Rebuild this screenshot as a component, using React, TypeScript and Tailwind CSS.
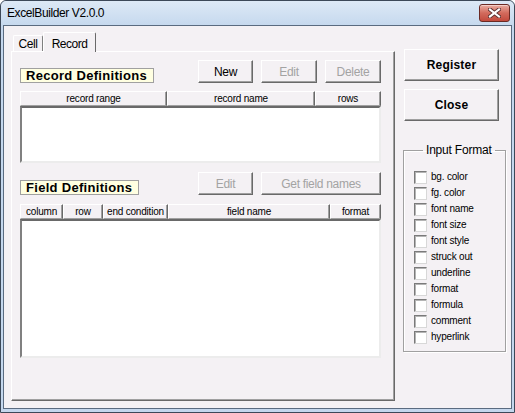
import React from "react";

const checks = [
  "bg. color",
  "fg. color",
  "font name",
  "font size",
  "font style",
  "struck out",
  "underline",
  "format",
  "formula",
  "comment",
  "hyperlink",
];

function Btn({
  label,
  w,
  h = "h-[23px]",
  disabled = false,
  bold = false,
}: {
  label: string;
  w: string;
  h?: string;
  disabled?: boolean;
  bold?: boolean;
}) {
  return (
    <button
      type="button"
      className={`${w} ${h} flex items-center justify-center bg-[#f4f1f4] border border-t-white border-l-white border-r-[#696969] border-b-[#696969] shadow-[inset_-1px_-1px_0_#a0a0a0] ${
        bold ? "text-[12px] font-bold tracking-[0.2px]" : "text-[12px] tracking-[-0.3px]"
      } ${disabled ? "text-[#a3a3a3]" : "text-black"}`}
    >
      {label}
    </button>
  );
}

function HeaderCell({ label, w }: { label: string; w: string }) {
  return (
    <div
      className={`${w} h-full flex items-center justify-center text-[10px] tracking-[-0.2px] border border-t-white border-l-white border-r-[#696969] border-b-[#a0a0a0] shadow-[inset_-1px_0_0_#a0a0a0]`}
    >
      {label}
    </div>
  );
}

function SectionLabel({ label, w }: { label: string; w: string }) {
  return (
    <div
      className={`${w} h-[15px] flex items-center pl-[5px] bg-[#ffffe1] border border-[#a0a0a0] text-[13px] font-bold tracking-[0.3px] leading-none`}
    >
      {label}
    </div>
  );
}

function ListBody({ h }: { h: string }) {
  return (
    <div
      className={`${h} w-[361px] bg-white border-2 border-t-[#696969] border-l-[#808080] border-r-[#ececec] border-b-[#ececec]`}
    />
  );
}

export default function App() {
  return (
    <div className="w-[515px] h-[413px] flex flex-col bg-[#c4d7ed] border border-[#3c4858] rounded-t-[6px] font-['Liberation_Sans',Arial,sans-serif] text-black overflow-hidden">
      {/* Title bar */}
      <div className="h-[24px] flex items-start bg-gradient-to-b from-[#dde9f6] to-[#c6d9ee] rounded-t-[5px]">
        <span className="ml-[6px] mt-[5px] text-[12px] tracking-[-0.4px] leading-[14px]">
          ExcelBuilder V2.0.0
        </span>
        <div className="ml-auto mr-[4px] mt-[3px] w-[31px] h-[18px] rounded-[3px] border border-[#6b2a24] bg-gradient-to-b from-[#e8aca2] via-[#d26a5c] to-[#c24a3d] flex items-center justify-center shadow-[inset_0_1px_0_#f4cfc8]">
          <svg width="13" height="10" viewBox="0 0 13 10">
            <path d="M2 1.5 L11 8.5 M11 1.5 L2 8.5" stroke="#5a3030" strokeWidth="4" strokeLinecap="square" />
            <path d="M2 1.5 L11 8.5 M11 1.5 L2 8.5" stroke="#ffffff" strokeWidth="2.2" strokeLinecap="square" />
          </svg>
        </div>
      </div>

      {/* Client area */}
      <div className="flex-1 mx-[2px] mb-[3px] border border-[#5a6b80] bg-[#f4f1f4] flex">
        {/* Tab control */}
        <div className="ml-[7px] pt-[6px] w-[384px] flex flex-col">
          <div className="h-[19px] flex items-end pl-[2px]">
            <div className="w-[30px] h-[16px] flex items-center justify-center text-[12px] tracking-[-0.4px] border border-b-0 border-t-white border-l-white border-r-[#808080] rounded-t-[2px]">
              Cell
            </div>
            <div className="relative z-10 -mb-px w-[53px] h-[20px] flex items-start justify-center pt-[2px] bg-[#f4f1f4] text-[12px] tracking-[-0.5px] border border-b-0 border-t-white border-l-white border-r-[#696969] rounded-t-[2px]">
              Record
            </div>
          </div>
          <div className="h-[350px] pl-[8px] pt-[8px] border border-t-white border-l-white border-r-[#696969] border-b-[#696969] shadow-[inset_-1px_-1px_0_#a0a0a0]">
            {/* Record definitions */}
            <div className="w-[361px] h-[23px] flex items-end">
              <SectionLabel label="Record Definitions" w="w-[134px]" />
              <div className="ml-auto flex gap-[8px]">
                <Btn label="New" w="w-[55px]" />
                <Btn label="Edit" w="w-[56px]" disabled />
                <Btn label="Delete" w="w-[56px]" disabled />
              </div>
            </div>
            <div className="mt-[8px] w-[361px] h-[15px] flex">
              <HeaderCell label="record range" w="w-[147px]" />
              <HeaderCell label="record name" w="w-[148px]" />
              <HeaderCell label="rows" w="w-[66px]" />
            </div>
            <ListBody h="h-[57px]" />

            {/* Field definitions */}
            <div className="mt-[9px] w-[361px] h-[23px] flex items-end">
              <SectionLabel label="Field Definitions" w="w-[119px]" />
              <div className="ml-auto flex gap-[8px]">
                <Btn label="Edit" w="w-[55px]" disabled />
                <Btn label="Get field names" w="w-[120px]" disabled />
              </div>
            </div>
            <div className="mt-[9px] w-[361px] h-[15px] flex">
              <HeaderCell label="column" w="w-[43px]" />
              <HeaderCell label="row" w="w-[40px]" />
              <HeaderCell label="end condition" w="w-[65px]" />
              <HeaderCell label="field name" w="w-[162px]" />
              <HeaderCell label="format" w="w-[51px]" />
            </div>
            <ListBody h="h-[139px]" />
          </div>
        </div>

        {/* Right column */}
        <div className="ml-[8px] w-[103px] flex flex-col">
          <div className="mt-[23px] ml-[1px] flex flex-col gap-[8px]">
            <Btn label="Register" w="w-[95px]" h="h-[32px]" bold />
            <Btn label="Close" w="w-[95px]" h="h-[32px]" bold />
          </div>
          <fieldset className="mt-[22px] w-[103px] border border-[#a0a0a0] shadow-[inset_1px_1px_0_#fff,1px_1px_0_#fff] pl-[10px] pb-[6px]">
            <legend className="ml-[9px] px-[3px] text-[12px] tracking-[-0.2px] leading-[14px]">
              Input Format
            </legend>
            <div className="pt-[12px] flex flex-col">
              {checks.map((c) => (
                <div key={c} className="h-[16px] flex items-center gap-[4px]">
                  <div className="w-[13px] h-[13px] bg-white border border-t-[#7a7a7a] border-l-[#7a7a7a] border-r-[#d8d8d8] border-b-[#d8d8d8] shadow-[inset_1px_1px_0_#b4b4b4]" />
                  <span className="text-[10px] tracking-[-0.2px] leading-none">{c}</span>
                </div>
              ))}
            </div>
          </fieldset>
        </div>
      </div>
    </div>
  );
}
